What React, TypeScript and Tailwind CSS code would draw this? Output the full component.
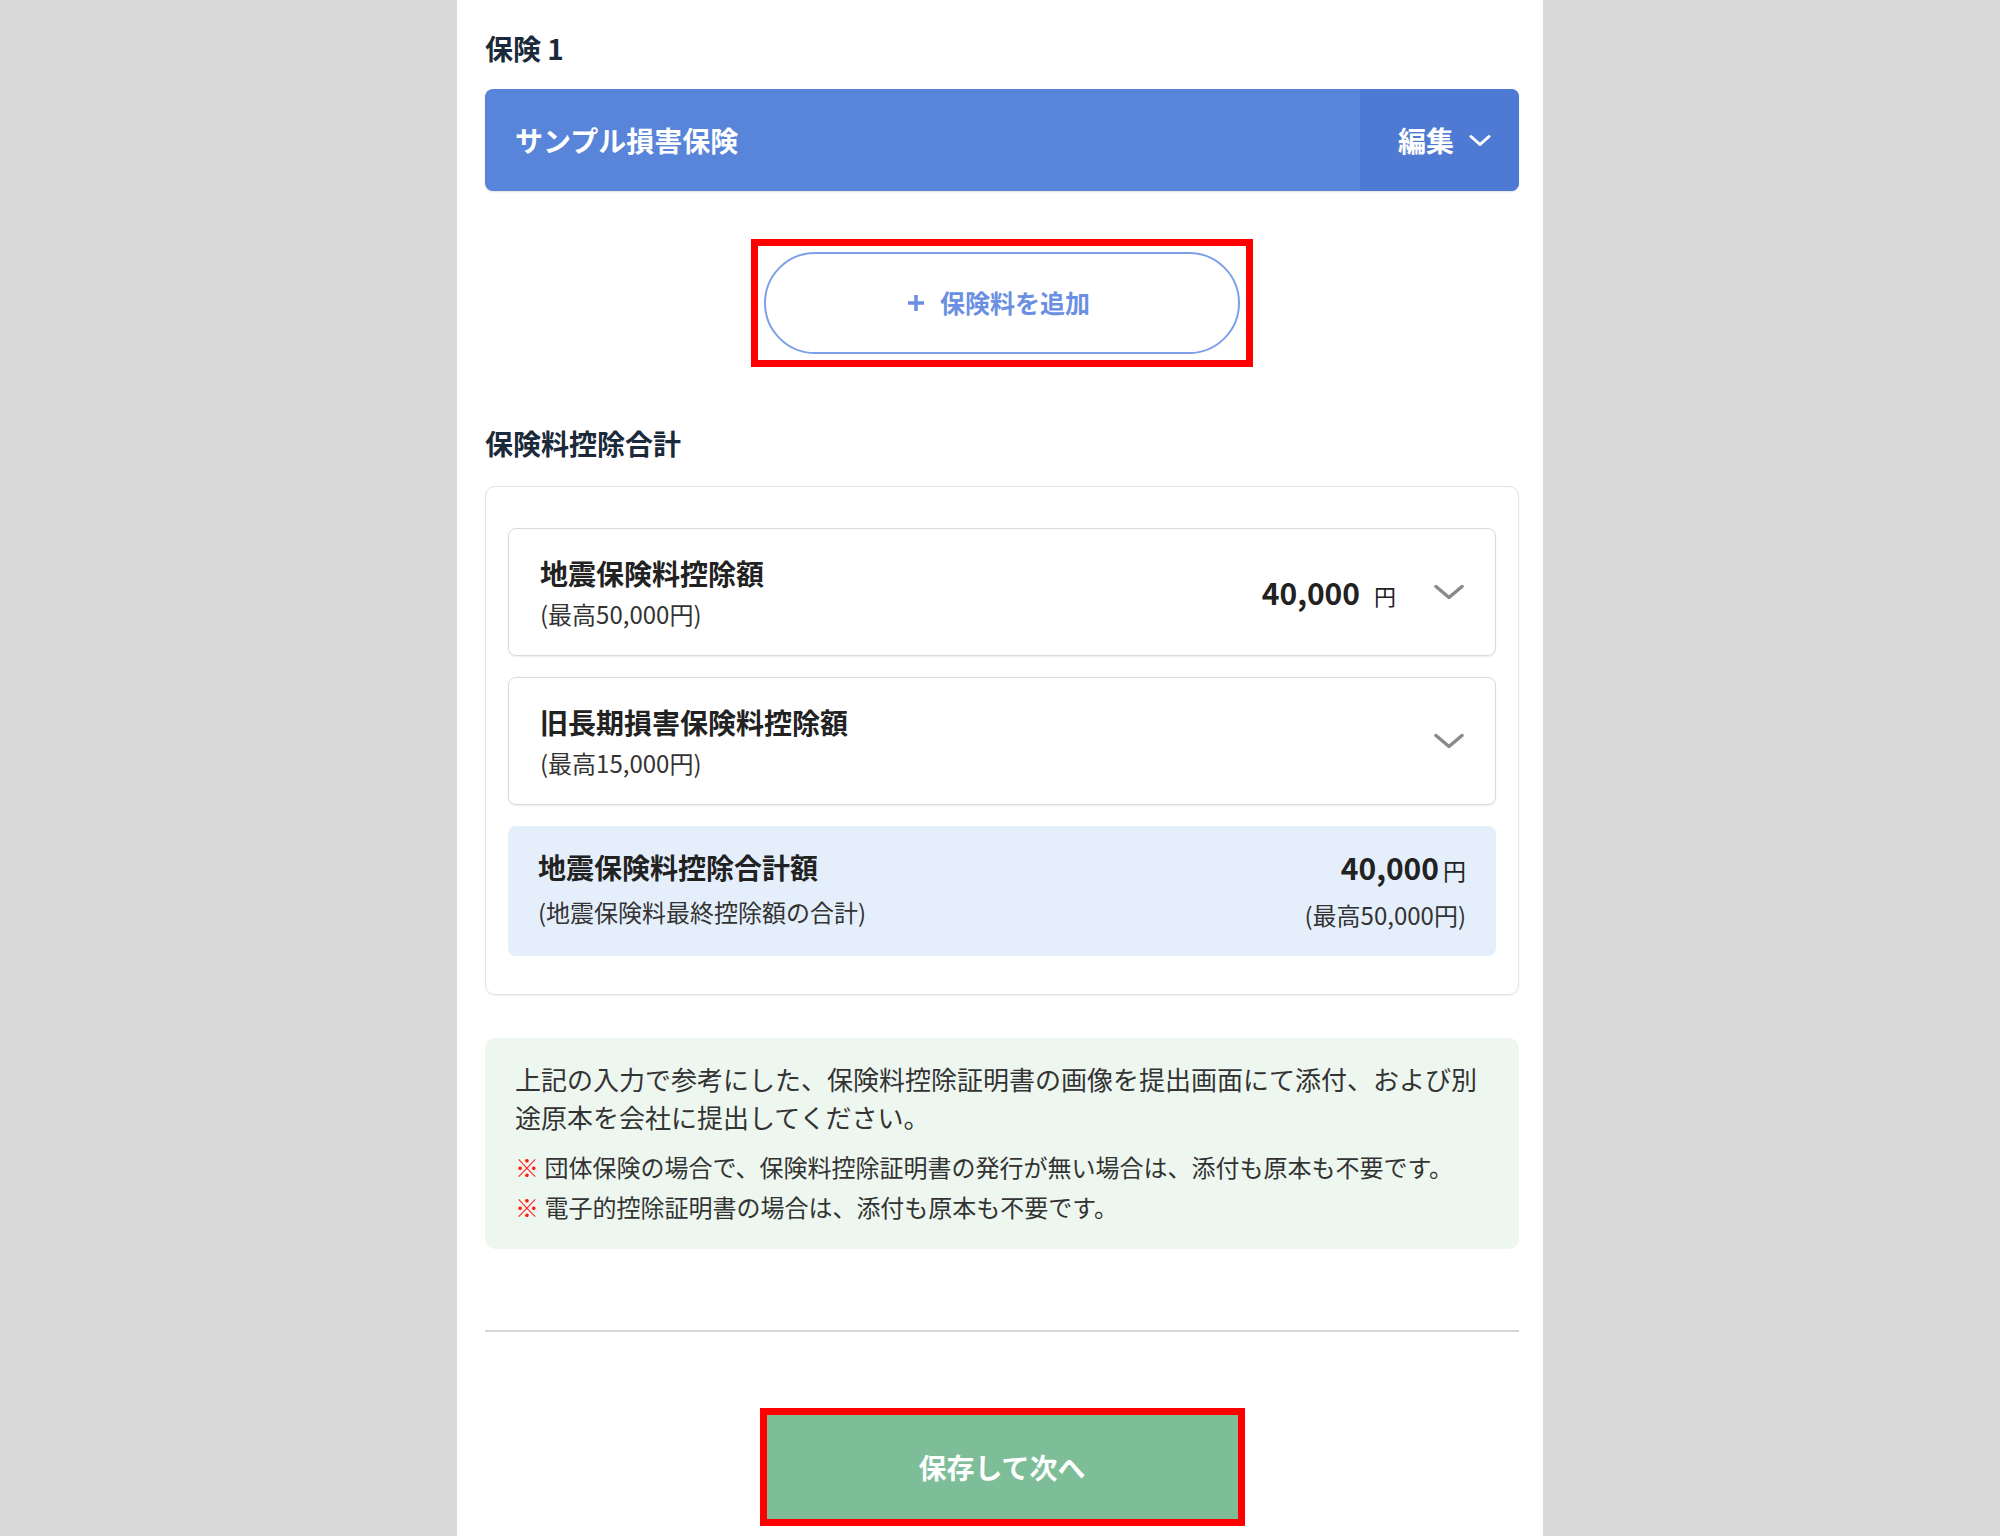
import React from "react";

function Chevron({ className = "" }: { className?: string }) {
  return (
    <svg width="30" height="16" viewBox="0 0 30 16" className={className} fill="none">
      <path d="M2 2.5 L15 13.5 L28 2.5" stroke="#8a8a8a" strokeWidth="3.5" strokeLinecap="round" strokeLinejoin="round" />
    </svg>
  );
}

export default function App() {
  return (
    <div className="min-h-screen bg-[#d9d9d9] font-['Noto_Sans_CJK_JP','Noto_Sans',sans-serif]">
      <div className="mx-auto h-[1536px] w-[1086px] overflow-hidden bg-white pl-[28px] pr-[24px] pt-[28px]">
        <h2 className="text-[28px] font-bold leading-[40px] text-[#1b2a3a]">保険 1</h2>

        <div className="mt-[21px] flex h-[102px] overflow-hidden rounded-[8px] bg-[#5884d9] shadow-[0_1px_2px_rgba(0,0,0,0.12)]">
          <div className="flex flex-1 items-center pl-[30px] text-[28px] font-bold text-white">サンプル損害保険</div>
          <button className="flex w-[159px] items-center gap-[15px] bg-[#4f7ad3] pl-[38px] text-[28px] font-bold text-white">
            <span>編集</span>
            <svg width="22" height="13" viewBox="0 0 22 13" fill="none">
              <path d="M2 2.5 L11 10.5 L20 2.5" stroke="white" strokeWidth="3" strokeLinecap="round" strokeLinejoin="round" />
            </svg>
          </button>
        </div>

        <div className="mt-[48px] flex justify-center">
          <div className="border-[7px] border-[#ff0000] p-[6px]">
            <button className="flex h-[102px] w-[476px] items-center justify-center gap-[16px] rounded-full border-2 border-[#7ea0e8] bg-white pr-[6px] text-[25px] font-bold text-[#6b8fe2]">
              <svg width="16" height="16" viewBox="0 0 16 16">
                <rect x="6.25" y="0" width="3.5" height="16" fill="#6b8fe2" />
                <rect x="0" y="6.25" width="16" height="3.5" fill="#6b8fe2" />
              </svg>
              <span>保険料を追加</span>
            </button>
          </div>
        </div>

        <h2 className="mt-[56px] text-[28px] font-bold leading-[40px] text-[#1b2a3a]">保険料控除合計</h2>

        <div className="mt-[23px] flex flex-col gap-[21px] rounded-[10px] border border-[#e2e2e2] px-[22px] pb-[38px] pt-[41px] shadow-[0_1px_2px_rgba(0,0,0,0.06)]">
          <div className="flex items-center rounded-[8px] border border-[#dadada] px-[31px] py-[24px] shadow-[0_1px_2px_rgba(0,0,0,0.08)]">
            <div className="flex-1">
              <div className="text-[28px] font-bold leading-[40px] text-[#222]">地震保険料控除額</div>
              <div className="mt-[4px] text-[24px] leading-[34px] text-[#333]">(最高50,000円)</div>
            </div>
            <div className="flex items-baseline text-[#222]">
              <span className="text-[30px] font-bold">40,000</span>
              <span className="ml-[14px] text-[22px]">円</span>
            </div>
            <Chevron className="ml-[38px]" />
          </div>

          <div className="flex items-center rounded-[8px] border border-[#dadada] px-[31px] py-[24px] shadow-[0_1px_2px_rgba(0,0,0,0.08)]">
            <div className="flex-1">
              <div className="text-[28px] font-bold leading-[40px] text-[#222]">旧長期損害保険料控除額</div>
              <div className="mt-[4px] text-[24px] leading-[34px] text-[#333]">(最高15,000円)</div>
            </div>
            <Chevron />
          </div>

          <div className="flex items-start justify-between rounded-[8px] bg-[#e5effc] px-[30px] pb-[24px] pt-[21px]">
            <div>
              <div className="text-[28px] font-bold leading-[40px] text-[#222]">地震保険料控除合計額</div>
              <div className="mt-[8px] text-[24px] leading-[34px] text-[#333]">(地震保険料最終控除額の合計)</div>
            </div>
            <div className="text-right">
              <div className="flex items-baseline justify-end leading-[40px] text-[#222]">
                <span className="text-[30px] font-bold">40,000</span>
                <span className="ml-[4px] text-[23px]">円</span>
              </div>
              <div className="mt-[8px] text-[24px] leading-[34px] text-[#333]">(最高50,000円)</div>
            </div>
          </div>
        </div>

        <div className="mt-[43px] rounded-[10px] bg-[#eef7ef] px-[30px] pb-[22px] pt-[22px] text-[#333]">
          <p className="text-[26px] leading-[38px]">
            上記の入力で参考にした、保険料控除証明書の画像を提出画面にて添付、および別途原本を会社に提出してください。
          </p>
          <div className="mt-[11px] text-[24px] leading-[40px]">
            <p>
              <span className="text-[#ff1a1a]">※</span> 団体保険の場合で、保険料控除証明書の発行が無い場合は、添付も原本も不要です。
            </p>
            <p>
              <span className="text-[#ff1a1a]">※</span> 電子的控除証明書の場合は、添付も原本も不要です。
            </p>
          </div>
        </div>

        <div className="mt-[81px] h-[2px] bg-[#d6d6d6]" />

        <div className="mt-[76px] flex justify-center">
          <div className="border-[7px] border-[#ff0000]">
            <button className="flex h-[104px] w-[471px] items-center justify-center bg-[#7dbd98] text-[28px] font-bold text-white">
              保存して次へ
            </button>
          </div>
        </div>
      </div>
    </div>
  );
}
